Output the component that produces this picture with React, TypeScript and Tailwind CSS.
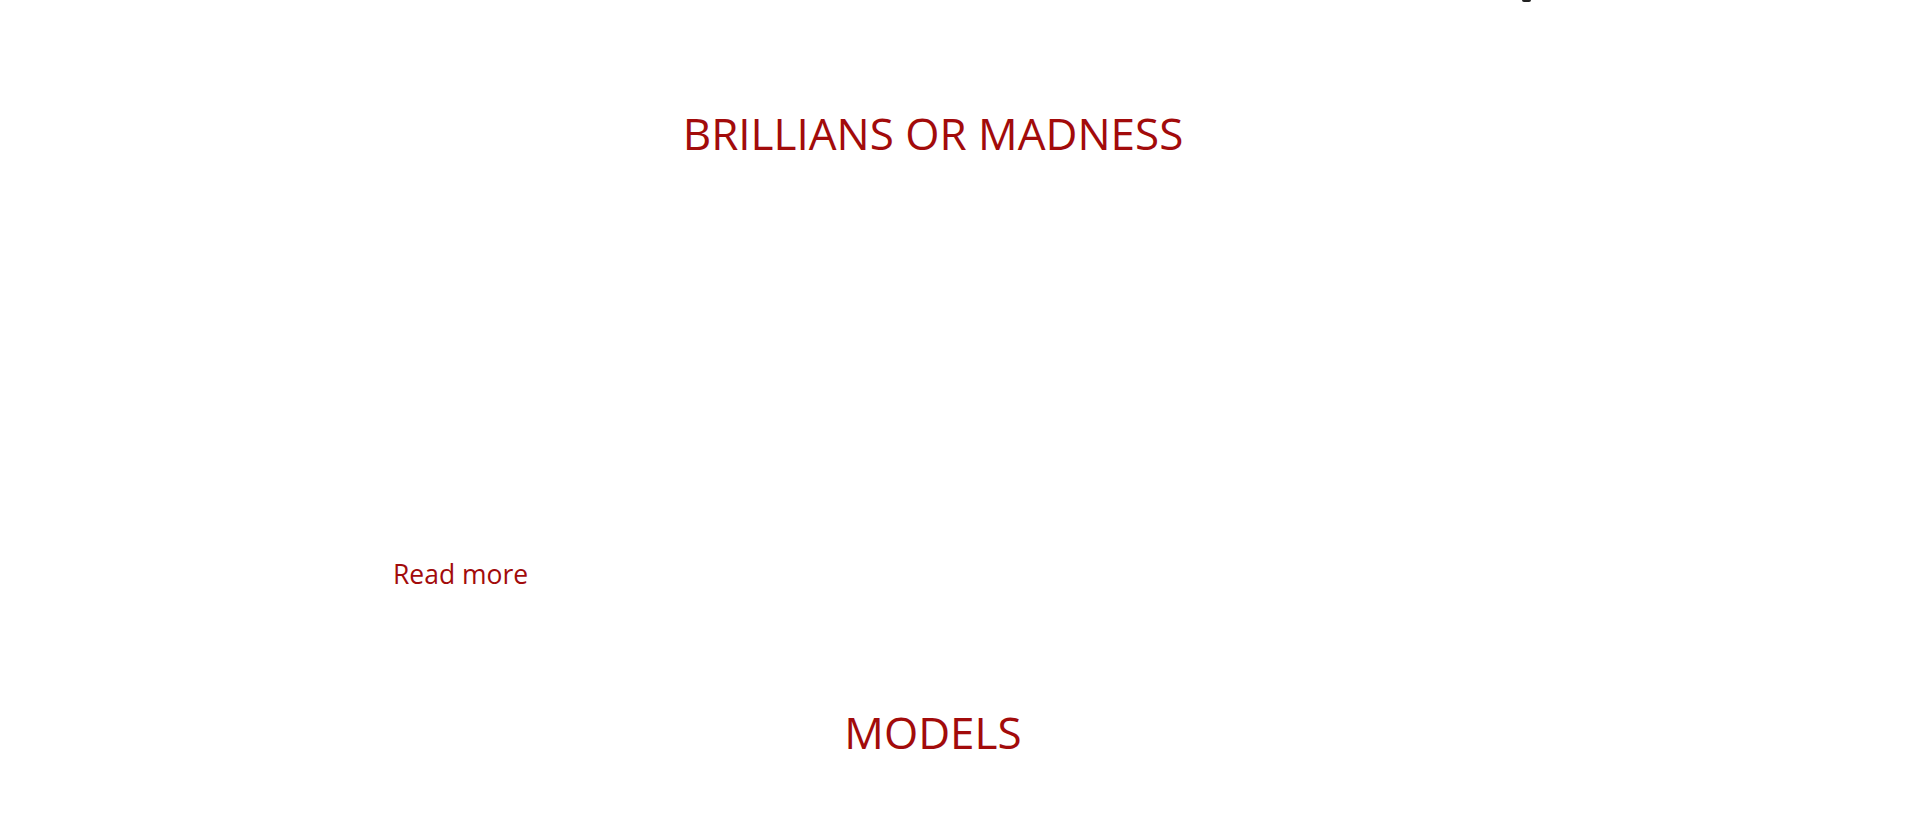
export default function App() {
  return (
    <div className="relative min-h-[825px] w-full bg-white" style={{ fontFamily: '"Open Sans", "Noto Sans", sans-serif' }}>
      <div className="absolute left-[1522px] top-0 h-[2px] w-[9px] rounded-b-full bg-[#222]" />
      <div className="ml-[393px] flex w-[1080px] flex-col">
        <h1 className="mt-[105px] text-center text-[44px] font-normal leading-[56px] text-[#a20b0b]">BRILLIANS OR MADNESS</h1>
        <div className="mt-[396px] text-[26.5px] leading-[34px] text-[#a20b0b]">Read more</div>
        <h2 className="mt-[113px] text-center text-[44px] font-normal leading-[56px] text-[#a20b0b]">MODELS</h2>
      </div>
    </div>
  );
}
